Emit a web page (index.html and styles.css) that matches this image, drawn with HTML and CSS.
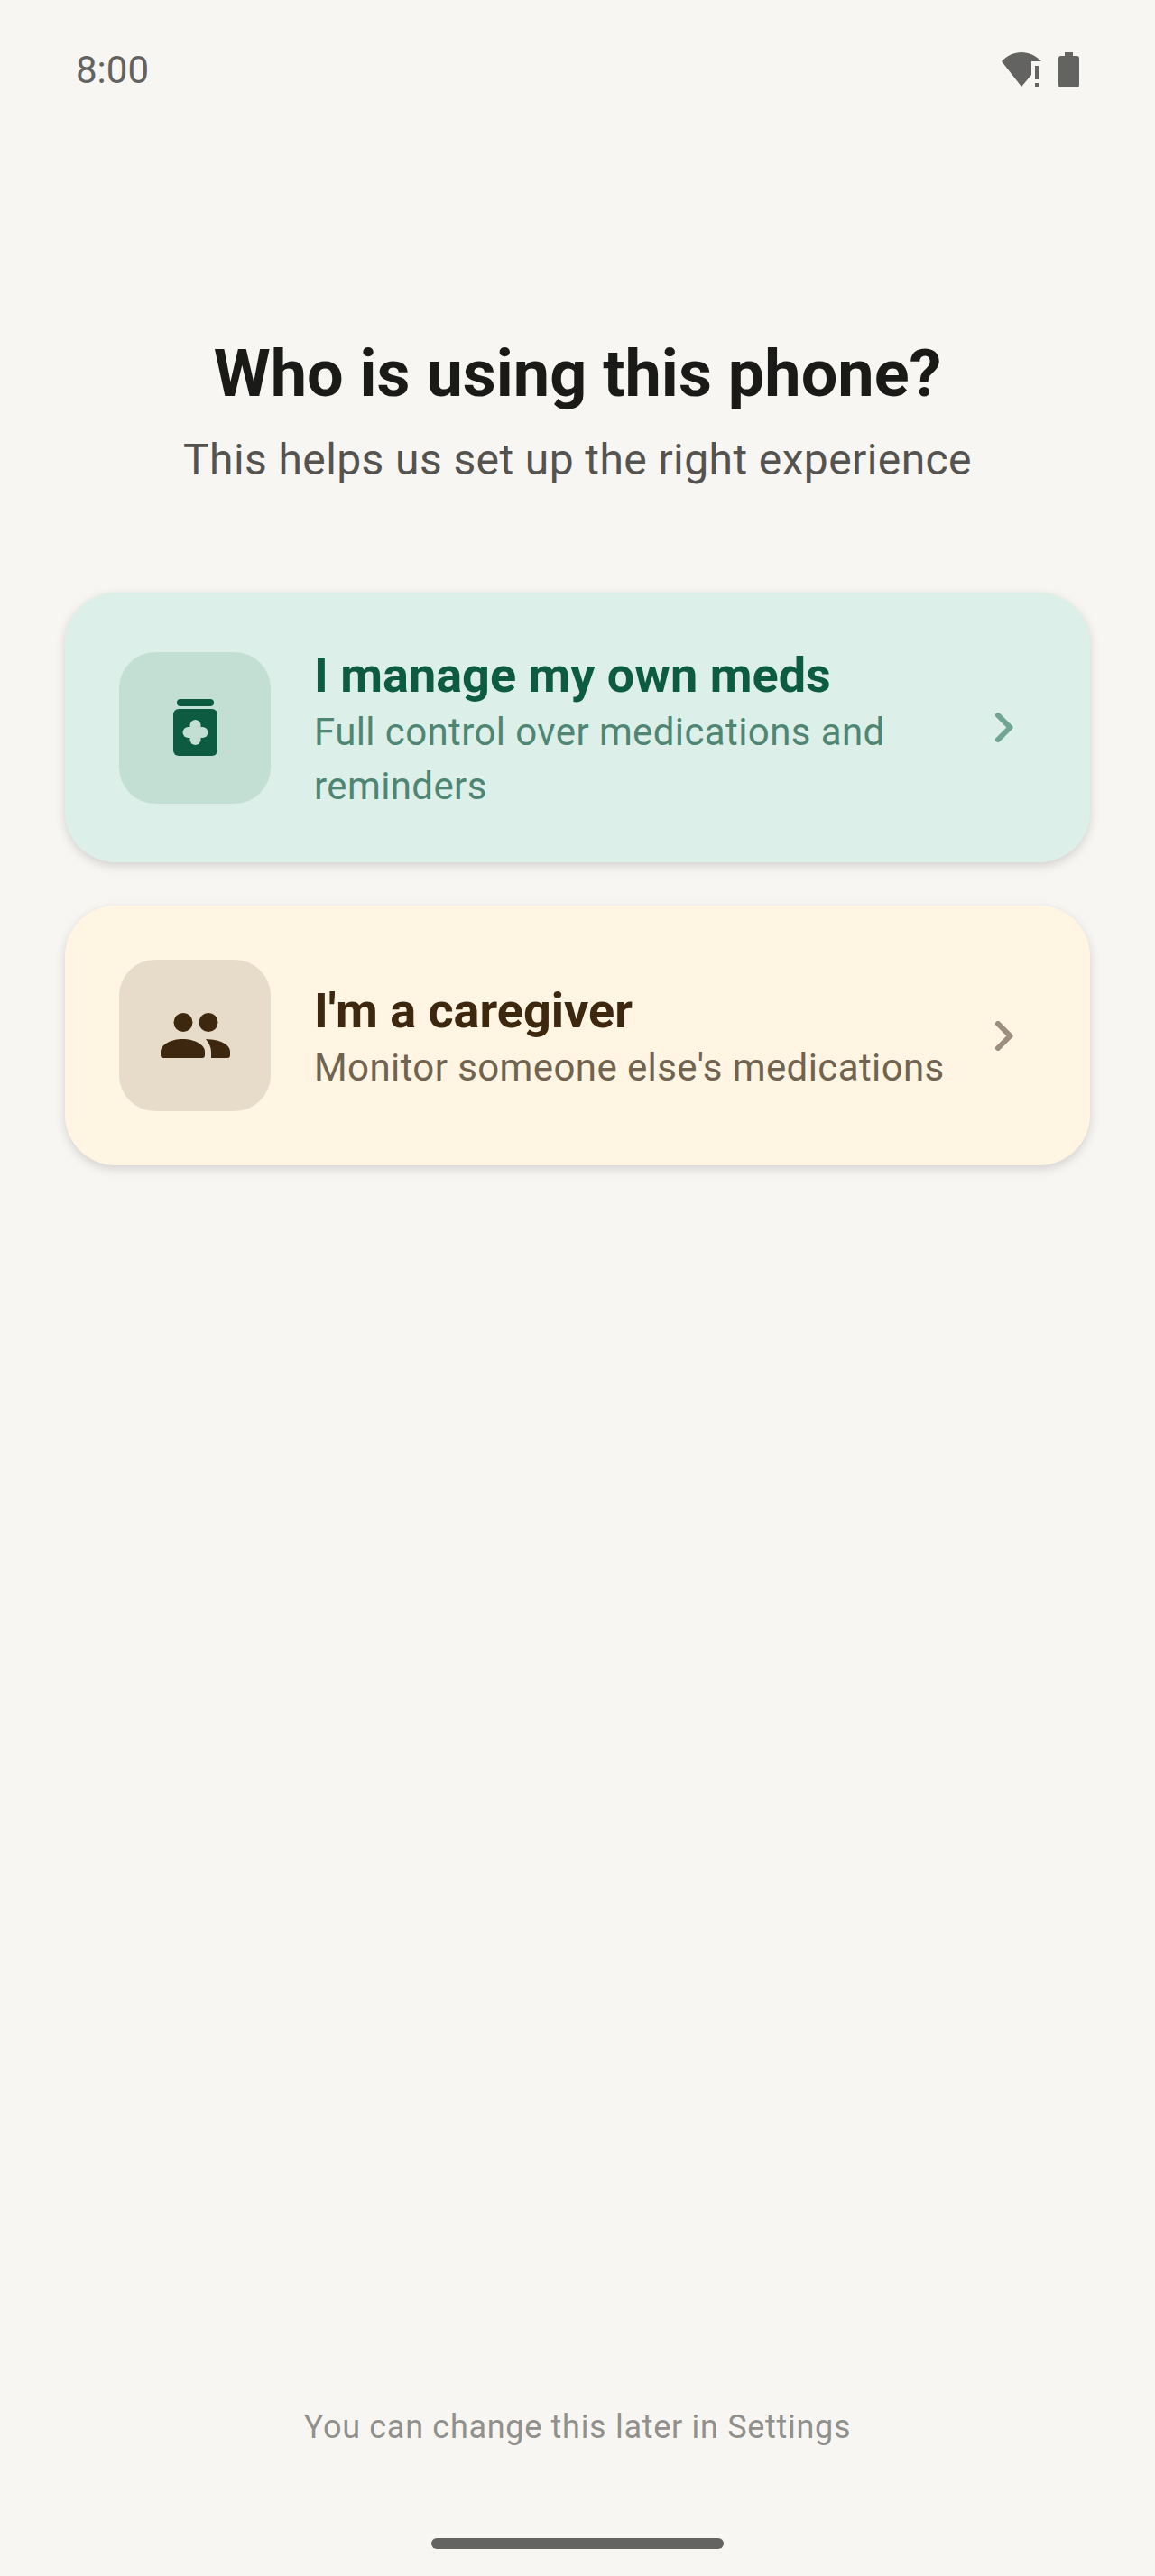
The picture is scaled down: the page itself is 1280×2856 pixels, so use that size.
FILE: index.html
```html
<!DOCTYPE html>
<html lang="en">
<head>
<meta charset="utf-8">
<title>Who is using this phone?</title>
<link rel="stylesheet" href="styles.css">
</head>
<body>
<div class="screen">
  <header class="status">
    <span class="time">8:00</span>
    <div class="status-icons">
      <svg width="44" height="38" viewBox="0 0 44 38"><path d="M0 10C6 3.500 14 0 22 0S38 3.500 44 10H33V25L22 38Z" fill="#636361"/><rect x="37" y="15" width="4" height="15" fill="#636361"/><rect x="37" y="34" width="4" height="4" fill="#636361"/></svg>
      <svg width="23" height="39" viewBox="0 0 23 39"><path d="M7 0h9v4h4.500A2.500 2.500 0 0 1 23 6.500V36a3 3 0 0 1-3 3H3a3 3 0 0 1-3-3V6.500A2.500 2.500 0 0 1 2.500 4H7z" fill="#636361"/></svg>
    </div>
  </header>
  <section class="intro">
    <h1 class="heading">Who is using this phone?</h1>
    <p class="subheading">This helps us set up the right experience</p>
  </section>
  <main class="cards">
    <div class="card card-green">
      <div class="icon-box">
        <svg width="49" height="63" viewBox="0 0 49 63"><rect x="4" y="0" width="41" height="8" rx="4" fill="#0d5c41"/><rect x="0" y="11" width="49" height="52" rx="6" fill="#0d5c41"/><rect x="10.500" y="31" width="28" height="12" rx="6" fill="#c3dfd4"/><rect x="18.500" y="23" width="12" height="28" rx="6" fill="#c3dfd4"/><circle cx="24.500" cy="37" r="7" fill="#c3dfd4"/></svg>
      </div>
      <div class="card-text">
        <div class="card-title">I manage my own meds</div>
        <div class="card-sub">Full control over medications and reminders</div>
      </div>
      <svg class="chev" width="20" height="33" viewBox="0 0 20 33"><path d="M3 3L16.500 16.500L3 30" fill="none" stroke="#6fa592" stroke-width="6" stroke-linecap="round" stroke-linejoin="round"/></svg>
    </div>
    <div class="card card-cream">
      <div class="icon-box">
        <svg width="77" height="50" viewBox="0 0 77 50"><circle cx="25" cy="10.500" r="10.500" fill="#3d280f"/><circle cx="53" cy="10.500" r="10.500" fill="#3d280f"/><path d="M3 50a3 3 0 0 1-3-3V43C0 35 12 29 24.500 29S49 35 49 43v4a3 3 0 0 1-3 3z" fill="#3d280f"/><path d="M50 29C66 29.500 77 35 77 43v4a3 3 0 0 1-3 3H56V43c0-5-2.500-10-6-14z" fill="#3d280f"/></svg>
      </div>
      <div class="card-text">
        <div class="card-title">I'm a caregiver</div>
        <div class="card-sub">Monitor someone else's medications</div>
      </div>
      <svg class="chev" width="20" height="33" viewBox="0 0 20 33"><path d="M3 3L16.500 16.500L3 30" fill="none" stroke="#9c8f7c" stroke-width="6" stroke-linecap="round" stroke-linejoin="round"/></svg>
    </div>
  </main>
  <footer class="foot">
    <p class="foot-note">You can change this later in Settings</p>
    <div class="home-bar"></div>
  </footer>
</div>
</body>
</html>
```
FILE: styles.css
```css
* { box-sizing: border-box; }
html, body { margin: 0; padding: 0; }
body { background: #f8f6f3; font-family: Roboto, "Liberation Sans", sans-serif; }
.screen { width: 1280px; height: 2856px; display: flex; flex-direction: column; overflow: hidden; }
.status { height: 116px; padding: 39px 84px 0; display: flex; justify-content: space-between; align-items: center; }
.time { font-size: 42px; line-height: 40px; color: #636361; }
.status-icons { display: flex; gap: 19px; align-items: flex-start; }
.intro { margin-top: 257px; text-align: center; }
.heading { margin: 0; font-size: 72px; line-height: 84px; font-weight: 700; color: #1a1a18; }
.subheading { margin: 23px 0 0; font-size: 48px; line-height: 60px; color: #555350; letter-spacing: 0.4px; }
.cards { margin: 117px 72px 0; display: flex; flex-direction: column; gap: 48px; }
.card { display: flex; align-items: center; padding: 60px; border-radius: 56px; box-shadow: 0 4px 12px rgba(0,0,0,0.15); }
.card-green { background: #dcefe8; }
.card-cream { background: #fff5e2; }
.icon-box { width: 168px; height: 168px; flex: none; border-radius: 40px; display: flex; align-items: center; justify-content: center; }
.card-green .icon-box { background: #c3dfd4; }
.card-cream .icon-box { background: #e6dcc9; }
.card-text { flex: 1; margin-left: 48px; }
.card-title { font-size: 54px; line-height: 64px; font-weight: 700; }
.card-sub { font-size: 42px; line-height: 60px; letter-spacing: 0.4px; margin-top: 1px; margin-bottom: -6px; }
.card-green .card-title { color: #0d5c41; }
.card-green .card-sub { color: #4f8673; }
.card-cream .card-title { color: #3d280f; }
.card-cream .card-sub { color: #70634f; }
.chev { flex: none; margin: 0 25px 0 20px; }
.foot { margin-top: auto; display: flex; flex-direction: column; align-items: center; }
.foot-note { margin: 0; font-size: 36px; line-height: 44px; color: #90908c; letter-spacing: 0.7px; }
.home-bar { width: 324px; height: 12px; border-radius: 6px; background: #636361; margin: 101px 0 30px; }
```
